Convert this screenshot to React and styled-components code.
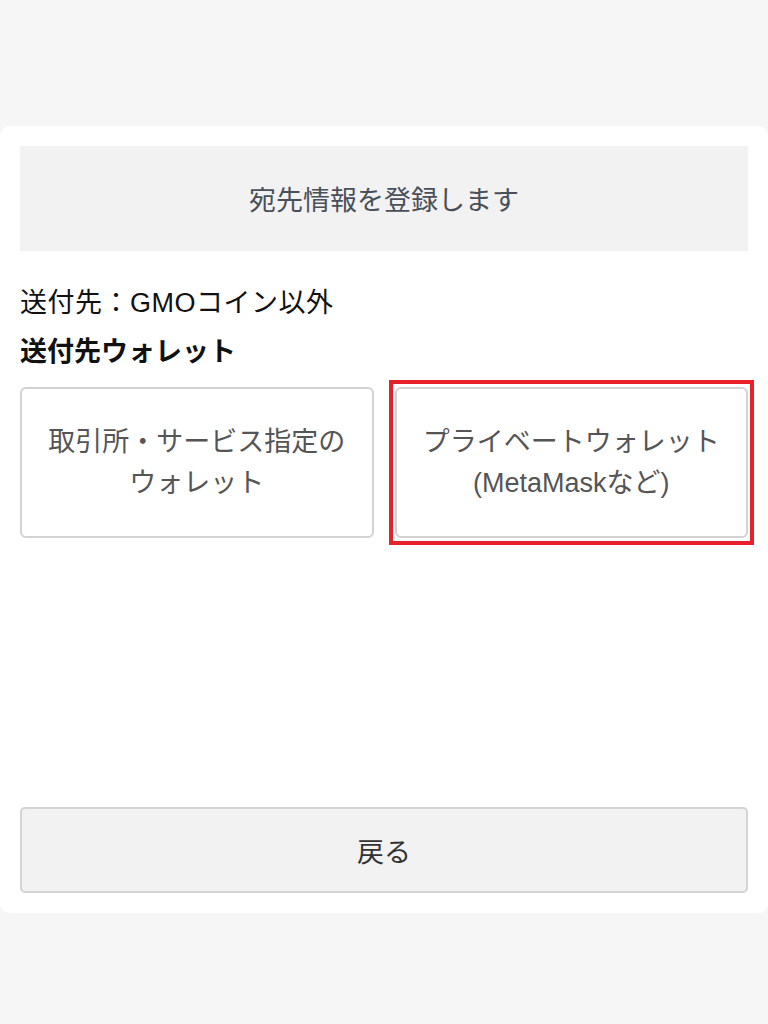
import React from 'react';
import styled, { createGlobalStyle } from 'styled-components';

const GlobalStyle = createGlobalStyle`
    html, body {
        margin: 0;
        padding: 0;
        background: #f6f6f6;
    }
    body {
        font-family: "Liberation Sans", "Noto Sans CJK JP", sans-serif;
    }
`;

const Page = styled.div`
    padding-top: 126px;
    min-height: 1024px;
    box-sizing: border-box;
`;

const Sheet = styled.section`
    background: #fff;
    border-radius: 10px;
    padding: 20px;
    box-sizing: border-box;
    min-height: 787px;
    display: flex;
    flex-direction: column;
`;

const Banner = styled.div`
    height: 105px;
    background: #f2f2f2;
    display: flex;
    align-items: center;
    justify-content: center;
    font-size: 27px;
    color: #4a505a;
`;

const Line = styled.p`
    margin: ${props => props.top || 0}px 0 0;
    font-size: 27px;
    line-height: 40px;
    color: #111;
    font-weight: ${props => (props.bold ? 700 : 400)};
    letter-spacing: ${props => (props.bold ? 0 : 0.5)}px;
`;

const Choices = styled.div`
    display: grid;
    grid-template-columns: 1fr 1fr;
    gap: 21px;
    margin-top: 15px;
`;

const Choice = styled.button`
    position: relative;
    height: 151px;
    background: #fff;
    border: 2px solid #d2d2d2;
    border-radius: 6px;
    font-family: inherit;
    font-size: 27px;
    line-height: 41px;
    color: #555;
    padding: 0 10px;

    /* red marker drawn over the chosen option */
    &::after {
        content: '';
        display: ${props => (props.marked ? 'block' : 'none')};
        position: absolute;
        top: -9px;
        bottom: -9px;
        left: -8px;
        right: -8px;
        border: 4px solid #e8202a;
        pointer-events: none;
    }
`;

const Back = styled.button`
    margin-top: auto;
    height: 86px;
    background: #f2f2f2;
    border: 2px solid #d4d4d4;
    border-radius: 5px;
    font-family: inherit;
    font-size: 27px;
    color: #333;
`;

const App = () => {
    return (
        <Page>
            <GlobalStyle />
            <Sheet>
                <Banner>宛先情報を登録します</Banner>
                <Line top={32}>送付先：GMOコイン以外</Line>
                <Line top={9} bold>送付先ウォレット</Line>
                <Choices>
                    <Choice>取引所・サービス指定の<br />ウォレット</Choice>
                    <Choice marked>プライベートウォレット<br />(MetaMaskなど)</Choice>
                </Choices>
                <Back>戻る</Back>
            </Sheet>
        </Page>
    );
};

export default App;
